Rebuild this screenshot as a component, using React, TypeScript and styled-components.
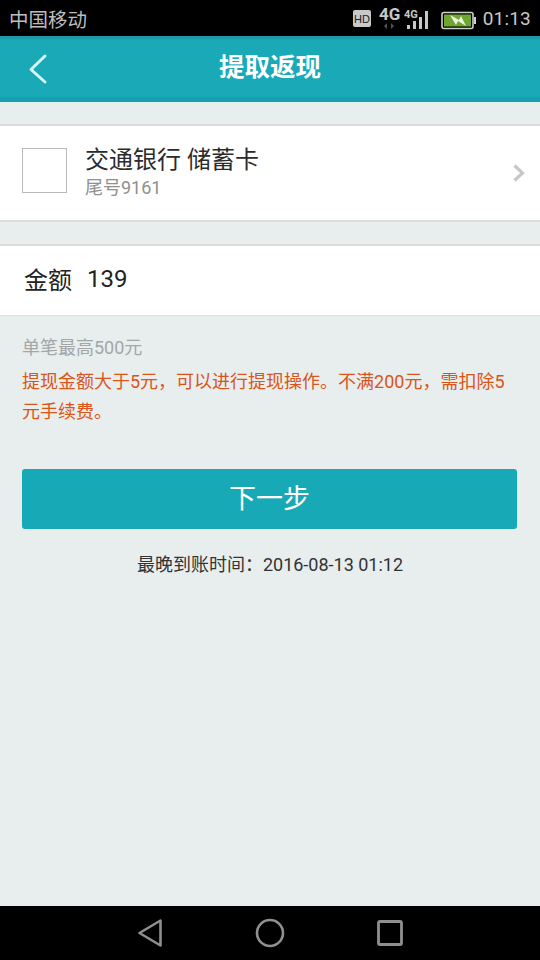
import React from 'react';
import styled, { createGlobalStyle } from 'styled-components';

const Global = createGlobalStyle`
  html, body { margin: 0; padding: 0; background: #e8eeee; }
  body { font-family: Roboto, "Noto Sans CJK SC", sans-serif; }
  * { box-sizing: border-box; }
`;

const Page = styled.div`
  width: 540px;
  height: 960px;
  display: flex;
  flex-direction: column;
  overflow: hidden;
  background: #e8eeee;
`;

const StatusBar = styled.div`
  height: 36px;
  flex: none;
  background: #000;
  display: flex;
  align-items: center;
  padding: 0 9px 0 9px;
`;

const Carrier = styled.span`
  font-size: 19.5px;
  color: #bdbdbd;
  flex: 1;
`;

const StatusIcons = styled.svg`
  display: block;
  margin-right: 4px;
`;

const Clock = styled.span`
  font-size: 19px;
  color: #c8c8c8;
  letter-spacing: 0.2px;
`;

const NavBar = styled.div`
  height: 66px;
  flex: none;
  background: #19a9b7;
  border-top: 3px solid #1a9aa8;
  border-bottom: 5px solid #169faf;
  display: flex;
  align-items: center;
  justify-content: center;
  position: relative;
`;

const BackIcon = styled.svg`
  position: absolute;
  left: 28px;
  top: 14px;
`;

const Title = styled.h1`
  margin: 0;
  font-size: 25.5px;
  font-weight: 700;
  color: #fff;
  line-height: 1;
`;

const Card = styled.div<{ $h: number; $mt: number; $bottom: string }>`
  height: ${p => p.$h}px;
  margin-top: ${p => p.$mt}px;
  flex: none;
  background: #fff;
  border-top: 2px solid #d9dddd;
  border-bottom: ${p => p.$bottom};
  display: flex;
  align-items: center;
`;

const BankLogo = styled.div`
  width: 45px;
  height: 45px;
  margin: 0 0 6px 22px;
  border: 1.5px solid #bababa;
  flex: none;
`;

const BankInfo = styled.div`
  margin-left: 18px;
  flex: 1;
  display: flex;
  flex-direction: column;
`;

const BankName = styled.div`
  font-size: 24px;
  line-height: 30px;
  color: #2b2b2b;
`;

const CardTail = styled.div`
  font-size: 18px;
  line-height: 26px;
  color: #8f8f8f;
`;

const Chevron = styled.svg`
  margin-right: 14px;
  flex: none;
`;

const AmountRow = styled.div`
  display: flex;
  align-items: center;
  padding-bottom: 4px;
`;

const AmountLabel = styled.span`
  margin-left: 24px;
  font-size: 24px;
  color: #222;
`;

const AmountValue = styled.span`
  margin-left: 15px;
  font-size: 24px;
  color: #222;
`;

const Notes = styled.div`
  padding: 18px 30px 0 22px;
`;

const Limit = styled.div`
  font-size: 18px;
  line-height: 28px;
  color: #a3a7a7;
`;

const Warning = styled.div`
  font-size: 18px;
  line-height: 30px;
  margin-top: 5px;
  color: #da5518;
`;

const NextButton = styled.button`
  display: block;
  width: 495px;
  height: 60px;
  margin: 42px 0 0 22px;
  border: 0;
  border-radius: 3px;
  background: #18a9b7;
  color: #fff;
  font-family: inherit;
  font-size: 27px;
  padding: 0 0 6px;
`;

const Arrival = styled.div`
  margin-top: 24px;
  text-align: center;
  font-size: 18px;
  line-height: 24px;
  color: #333;
`;

const Spacer = styled.div`
  flex: 1;
`;

const SoftKeys = styled.div`
  height: 54px;
  flex: none;
  background: #000;
  display: flex;
  justify-content: center;
  align-items: center;
`;

const SoftKey = styled.svg`
  display: block;
`;

export default function App() {
  return (
    <Page>
      <Global />
      <StatusBar>
        <Carrier>中国移动</Carrier>
        <StatusIcons width="126" height="32" viewBox="0 -4 126 32">
          <rect x="0" y="4" width="18" height="17" rx="2" fill="#c9c9c9" />
          <text x="9" y="17" fontSize="11" fontFamily="Liberation Sans" textAnchor="middle" fill="#222">HD</text>
          <text x="26" y="14" fontSize="17" fontWeight="700" fontFamily="Roboto" fill="#c8c8c8">4G</text>
          <path d="M31 20l3-3v6zM41 20l-3-3v6z" fill="#555" />
          <text x="51" y="12" fontSize="11" fontWeight="700" fontFamily="Roboto" fill="#c8c8c8">4G</text>
          <g fill="#c8c8c8">
            <rect x="54" y="19" width="3" height="4" />
            <rect x="60" y="15" width="3" height="8" />
            <rect x="66" y="11" width="3" height="12" />
            <rect x="72" y="5" width="3" height="18" />
          </g>
          <rect x="89" y="6.5" width="31" height="16" rx="2" fill="none" stroke="#d0d0d0" strokeWidth="1.6" />
          <rect x="91" y="8.5" width="27" height="12" fill="#6fa62f" />
          <rect x="121" y="11" width="2" height="7" fill="#d0d0d0" />
          <path d="M97 9l9 5 2-4 5 10-8-5-2 4z" fill="#eef5df" />
        </StatusIcons>
        <Clock>01:13</Clock>
      </StatusBar>
      <NavBar>
        <BackIcon width="20" height="32" viewBox="0 0 20 32">
          <path d="M17 3 L3 16.5 L17 29" fill="none" stroke="#d8f6f8" strokeWidth="3" strokeLinecap="round" strokeLinejoin="round" />
        </BackIcon>
        <Title>提取返现</Title>
      </NavBar>
      <Card $h={98} $mt={22} $bottom="2px solid #d9dddd">
        <BankLogo />
        <BankInfo>
          <BankName>交通银行 储蓄卡</BankName>
          <CardTail>尾号9161</CardTail>
        </BankInfo>
        <Chevron width="14" height="20" viewBox="0 0 14 20">
          <path d="M2.5 2.5 L10.5 10 L2.5 17.5" fill="none" stroke="#c6c8c8" strokeWidth="3.2" />
        </Chevron>
      </Card>
      <Card $h={72} $mt={22} $bottom="1px solid #dcdfdf">
        <AmountRow>
          <AmountLabel>金额</AmountLabel>
          <AmountValue>139</AmountValue>
        </AmountRow>
      </Card>
      <Notes>
        <Limit>单笔最高500元</Limit>
        <Warning>提现金额大于5元，可以进行提现操作。不满200元，需扣除5元手续费。</Warning>
      </Notes>
      <NextButton>下一步</NextButton>
      <Arrival>最晚到账时间：2016-08-13 01:12</Arrival>
      <Spacer />
      <SoftKeys>
        <SoftKey width="280" height="34" viewBox="0 0 280 34">
          <path d="M9.5 17 L30.5 4.5 V29.5 Z" fill="none" stroke="#8f8f8f" strokeWidth="2.6" strokeLinejoin="round" />
          <circle cx="140" cy="17" r="13" fill="none" stroke="#8f8f8f" strokeWidth="2.6" />
          <rect x="248.5" y="5.5" width="23" height="23" rx="1.5" fill="none" stroke="#8f8f8f" strokeWidth="2.8" />
        </SoftKey>
      </SoftKeys>
    </Page>
  );
}
